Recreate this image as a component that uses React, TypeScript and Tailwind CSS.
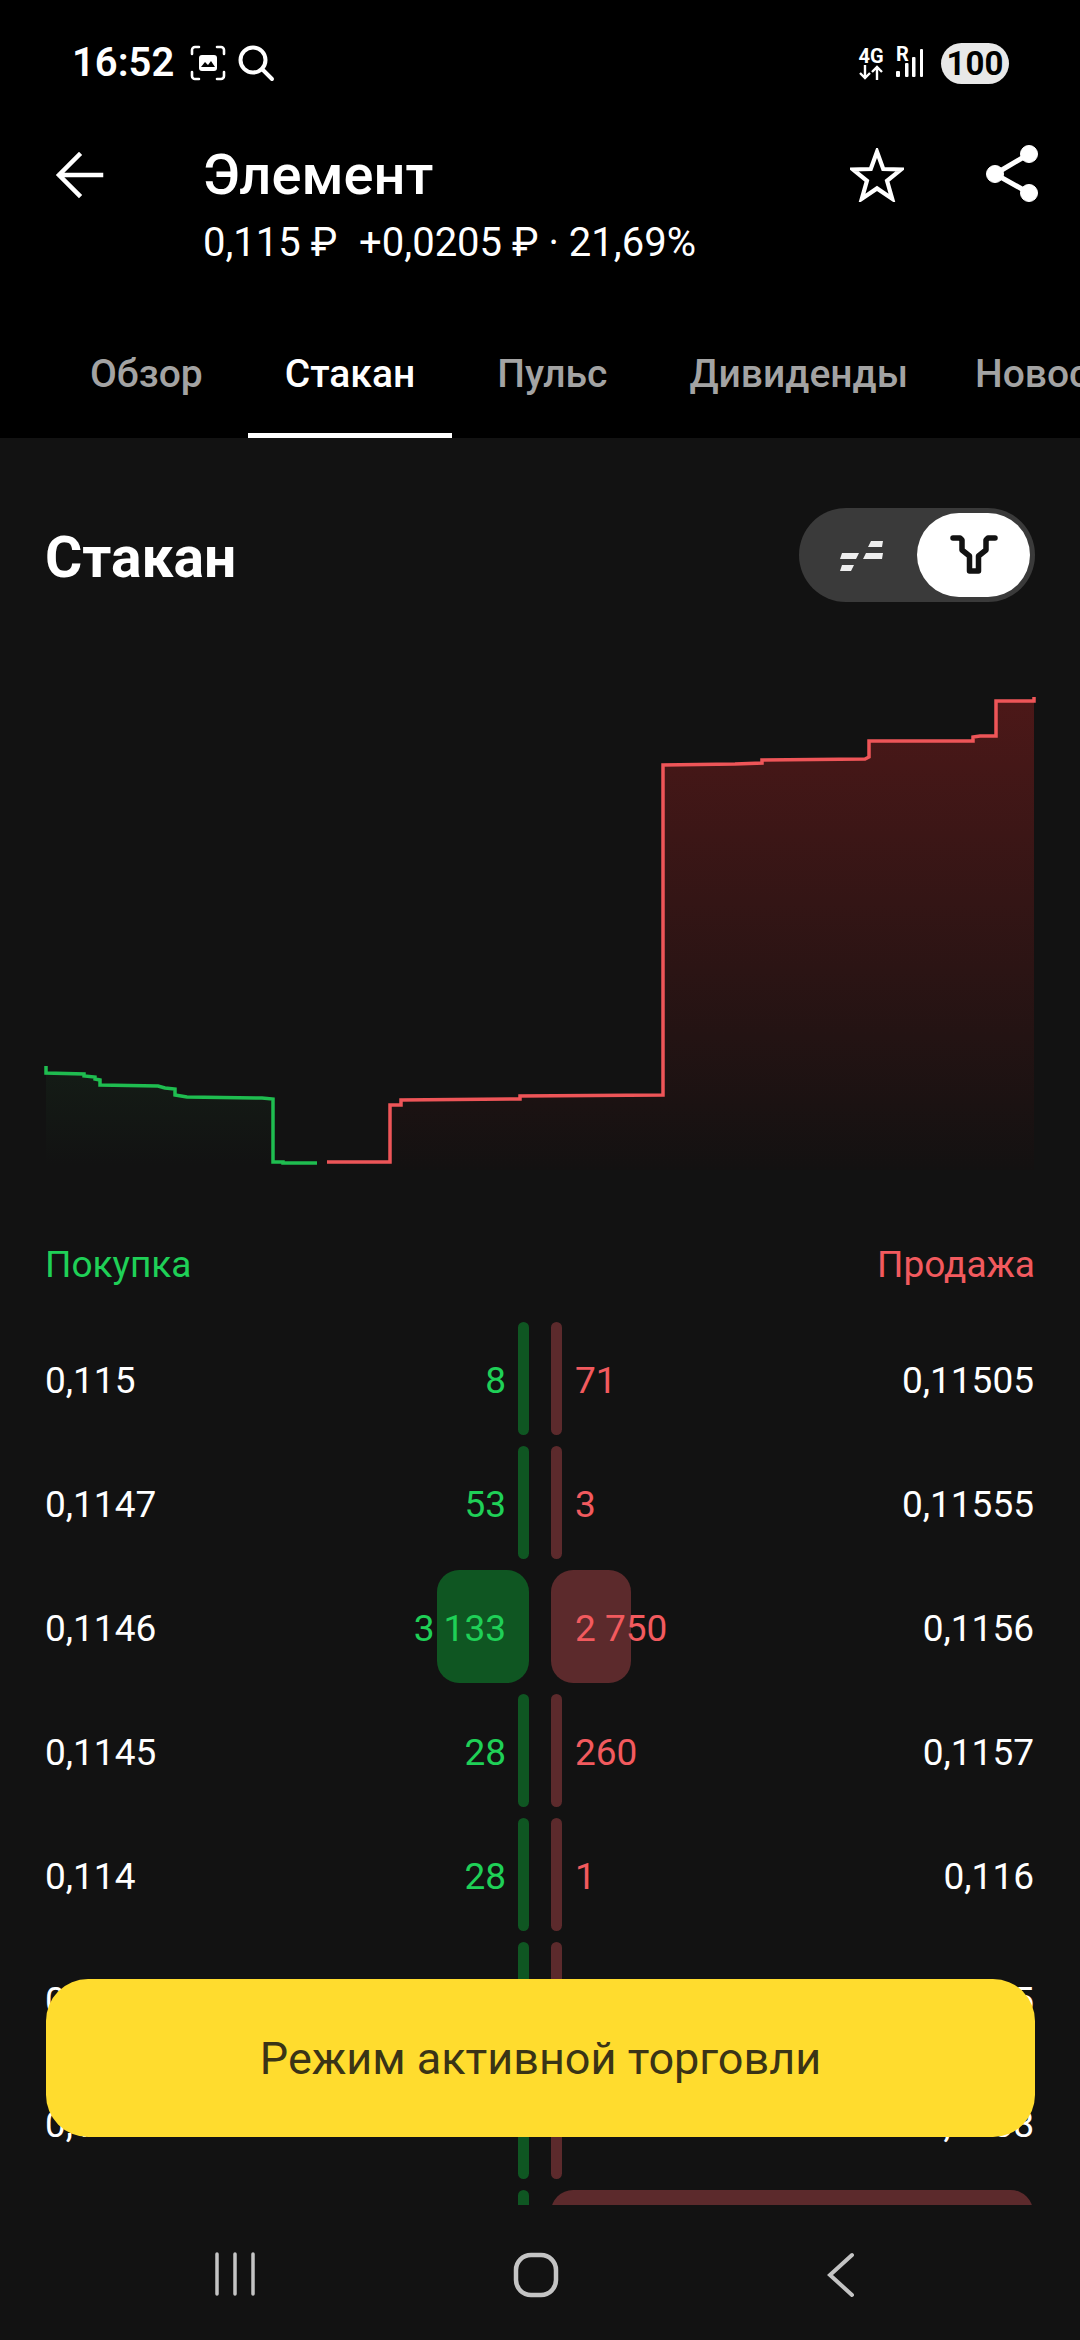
import React from "react";

const rows = [
  { p: "0,115", b: "8", a: "71", s: "0,11505", bw: 11, aw: 11 },
  { p: "0,1147", b: "53", a: "3", s: "0,11555", bw: 11, aw: 11 },
  { p: "0,1146", b: "3 133", a: "2 750", s: "0,1156", bw: 92, aw: 80 },
  { p: "0,1145", b: "28", a: "260", s: "0,1157", bw: 11, aw: 11 },
  { p: "0,114", b: "28", a: "1", s: "0,116", bw: 11, aw: 11 },
  { p: "0,1135", b: "41", a: "15", s: "0,1165", bw: 11, aw: 11 },
  { p: "0,1132", b: "17", a: "32", s: "0,1208", bw: 11, aw: 11 },
  { p: "0,113", b: "9", a: "18 400", s: "0,121", bw: 11, aw: 482 },
];

const tabs = ["Обзор", "Стакан", "Пульс", "Дивиденды", "Новости"];

const redLine =
  "M327 1162 H390 V1105 H401 V1100 L520 1099 V1096 L663 1095 V765 L735 764 L762 763 V760 L865 759 L869 757 V741 L973 741 V737 L980 736 H996 V701 H1034 V697";
const redFill =
  "M330 1162 H390 V1105 H401 V1100 L520 1099 V1096 L663 1095 V765 L735 764 L762 763 V760 L865 759 L869 757 V741 L973 741 V737 L980 736 H996 V701 H1034 V1170 H330 Z";
const greenLine =
  "M46 1066 V1073 L84 1074 V1076 L95 1077 V1079 L100 1080 V1085 L158 1086 L165 1088 L175 1089 V1095 L187 1097 L262 1098 L273 1099 V1162 L283 1162 V1163 H317";
const greenFill =
  "M46 1073 L84 1074 V1076 L95 1077 V1079 L100 1080 V1085 L158 1086 L165 1088 L175 1089 V1095 L187 1097 L262 1098 L273 1099 V1165 H46 Z";

function Chart() {
  return (
    <svg viewBox="0 640 1080 560" className="block w-[1080px] h-[560px]" fill="none">
      <defs>
        <linearGradient id="rf" gradientUnits="userSpaceOnUse" x1="0" y1="700" x2="0" y2="1170">
          <stop offset="0" stopColor="#4c1818" />
          <stop offset="1" stopColor="#131111" />
        </linearGradient>
        <linearGradient id="gf" gradientUnits="userSpaceOnUse" x1="0" y1="1070" x2="0" y2="1165">
          <stop offset="0" stopColor="#141c16" />
          <stop offset="1" stopColor="#121212" />
        </linearGradient>
      </defs>
      <path d={redFill} fill="url(#rf)" />
      <path d={greenFill} fill="url(#gf)" />
      <path d={redLine} stroke="#ee5558" strokeWidth="3.5" />
      <path d={greenLine} stroke="#1fbd50" strokeWidth="3.5" />
    </svg>
  );
}

function StatusBar() {
  return (
    <div className="h-[126px] flex items-center pl-[72px] text-white">
      <span className="w-[118px] text-[40px] font-semibold leading-none">16:52</span>
      <svg width="36" height="36" viewBox="0 0 36 36" fill="none" stroke="#fff" strokeWidth="2.6" strokeLinecap="round">
        <path d="M2 9V5a3 3 0 0 1 3-3h4M27 2h4a3 3 0 0 1 3 3v4M34 27v4a3 3 0 0 1-3 3h-4M9 34H5a3 3 0 0 1-3-3v-4" />
        <rect x="9" y="10" width="18" height="16" rx="3" fill="#fff" stroke="none" />
        <path d="M11 22l4-5 3 3 3-4 4 6z" fill="#000" stroke="none" />
      </svg>
      <svg className="ml-[11px]" width="38" height="38" viewBox="0 0 38 38" fill="none" stroke="#fff" strokeWidth="4" strokeLinecap="round">
        <circle cx="16" cy="16" r="12.5" />
        <path d="M25 25l10 10" />
      </svg>
      <div className="ml-auto flex items-center mr-[71px]">
        <div className="flex flex-col items-center w-[26px]">
          <span className="text-[20px] font-bold leading-[18px]">4G</span>
          <svg width="26" height="15" viewBox="0 0 26 15" fill="none" stroke="#fff" strokeWidth="2.4">
            <path d="M7 0v13M2 8l5 5 5-5M19 15V2M14 7l5-5 5 5" />
          </svg>
        </div>
        <div className="ml-[10px] relative w-[32px] h-[32px]">
          <span className="absolute left-[2px] -top-[2px] text-[20px] font-bold leading-[18px]">R</span>
          <svg className="absolute left-0 top-0" width="32" height="32" viewBox="0 0 32 32" fill="#fff">
            <rect x="2" y="24" width="4" height="6" rx="1" />
            <rect x="11" y="16" width="3.5" height="14" rx="1" />
            <rect x="18" y="10" width="3.5" height="20" rx="1" />
            <rect x="26" y="2" width="3" height="28" rx="1" />
          </svg>
        </div>
        <div className="ml-[15px] w-[68px] h-[41px] rounded-full bg-[#e8e8e8] flex items-center justify-center text-black text-[33px] font-bold leading-none">
          100
        </div>
      </div>
    </div>
  );
}

function Header() {
  return (
    <header className="h-[438px] bg-black text-white overflow-hidden shrink-0">
      <StatusBar />
      <div className="h-[192px] flex items-start pl-[55px] pt-[15px]">
        <svg className="mt-[9px]" width="50" height="50" viewBox="0 0 50 50" fill="none" stroke="#fff" strokeWidth="4.5" strokeLinecap="square">
          <path d="M46 25H5M24 5L4 25l20 20" />
        </svg>
        <div className="ml-[98px]">
          <div className="text-[56px] font-medium leading-[68px]">Элемент</div>
          <div className="mt-[10px] text-[40px] leading-[48px] whitespace-pre">
            <span>{"0,115 ₽  "}</span>
            <span className="ml-[2px]">{"+0,0205 ₽ · 21,69%"}</span>
          </div>
        </div>
        <svg className="ml-auto mt-[7px]" width="54" height="54" viewBox="0 0 58 58" fill="none" stroke="#fff" strokeWidth="4.5" strokeLinejoin="miter">
          <path d="M29 4l6.7 18.6 19.3.4-15.2 12.2 5.5 19.3L29 43.400 12.700 54.500l5.500-19.300L3 23l19.300-.4z" />
        </svg>
        <svg className="ml-[81px] mr-[41px] mt-[1px]" width="54" height="60" viewBox="0 0 54 60" fill="#fff" stroke="#fff">
          <circle cx="44" cy="12" r="8.500" />
          <circle cx="10" cy="32" r="8.500" />
          <circle cx="44" cy="51" r="8.500" />
          <path d="M44 12L10 32l34 19" fill="none" strokeWidth="5" />
        </svg>
      </div>
      <nav className="h-[120px] flex pl-[53px] gap-[8px] whitespace-nowrap">
        {tabs.map((t) => (
          <div
            key={t}
            className={
              t === "Стакан"
                ? "relative h-full px-[37px] pb-[8px] flex items-center text-[39px] font-medium text-white"
                : t === "Новости"
                  ? "relative h-full px-[37px] -ml-[15px] pb-[8px] flex items-center text-[39px] font-medium text-[#a3a3a3]"
                  : "relative h-full px-[37px] pb-[8px] flex items-center text-[39px] font-medium text-[#a3a3a3]"
            }
          >
            {t}
            {t === "Стакан" && <div className="absolute left-0 right-0 bottom-0 h-[5px] bg-white" />}
          </div>
        ))}
      </nav>
    </header>
  );
}

function Toggle() {
  return (
    <div className="w-[236px] h-[94px] rounded-full bg-[#3a3a3a] flex items-center p-[5px]">
      <div className="flex-1 flex justify-center">
        <svg width="44" height="32" viewBox="0 0 44 32" fill="#eeeeee">
          <path d="M3 14h17l-3 6H1zM3 26h12l-3 6H1zM27 14h17l-1 6H24zM32 2h12l-1 6H29z" />
        </svg>
      </div>
      <div className="w-[113px] h-[84px] rounded-full bg-white flex items-center justify-center">
        <svg width="48" height="40" viewBox="0 0 48 40" fill="none" stroke="#121212" strokeWidth="5.500" strokeLinejoin="round" strokeLinecap="round">
          <path d="M3 3h7l2 2V15l7.500 6v15h9V21l7.500-6V5l2-2h7" />
        </svg>
      </div>
    </div>
  );
}

function Rows() {
  return (
    <div className="text-[37px] leading-none">
      {rows.map((r, i) => (
        <div key={i} className="flex h-[113px] mb-[11px]">
          <div className="relative w-[484px] ml-[45px] pt-[3px] flex items-center justify-between">
            <div
              className="absolute right-0 top-0 bottom-0 bg-[#0f5622] rounded-[11px] data-[big=true]:rounded-[22px]"
              data-big={r.bw > 11}
              style={{ width: r.bw }}
            />
            <span className="relative text-white">{r.p}</span>
            <span className="relative text-[#1fd057] pr-[23px]">{r.b}</span>
          </div>
          <div className="relative w-[483px] ml-[22px] pt-[3px] flex items-center justify-between">
            <div
              className="absolute left-0 top-0 bottom-0 bg-[#5c2a2c] rounded-[11px] data-[big=true]:rounded-[22px]"
              data-big={r.aw > 11}
              style={{ width: r.aw }}
            />
            <span className="relative text-[#f25a5e] pl-[24px]">{r.a}</span>
            <span className="relative text-white">{r.s}</span>
          </div>
        </div>
      ))}
    </div>
  );
}

function NavBar() {
  return (
    <div className="h-[135px] bg-[#121212] shrink-0 relative flex pt-[47px] pl-[214px]">
      <svg width="42" height="44" viewBox="0 0 42 44" fill="none" stroke="#c4c4c4" strokeWidth="3.500" strokeLinecap="round">
        <path d="M3 2v40M21 2v40M39 2v40" />
      </svg>
      <svg className="ml-[257px]" width="46" height="46" viewBox="0 0 46 46" fill="none" stroke="#c4c4c4" strokeWidth="4.500">
        <rect x="3" y="3" width="40" height="40" rx="15" />
      </svg>
      <svg className="ml-[266px]" width="30" height="46" viewBox="0 0 30 46" fill="none" stroke="#c4c4c4" strokeWidth="4" strokeLinecap="round">
        <path d="M27 3L5 23l22 20" />
      </svg>
    </div>
  );
}

export default function App() {
  return (
    <div className="w-[1080px] h-[2340px] bg-[#121212] flex flex-col overflow-hidden font-['Roboto',sans-serif]">
      <Header />
      <main className="relative flex-1 min-h-0 overflow-hidden">
        <div className="pt-[70px] px-[45px] flex items-center justify-between">
          <h1 className="text-[57px] pt-[4px] font-bold leading-none text-white">Стакан</h1>
          <Toggle />
        </div>
        <div className="mt-[38px]">
          <Chart />
        </div>
        <div className="h-[122px] pt-[8px] px-[45px] flex items-center justify-between text-[37px]">
          <span className="text-[#1fd057]">Покупка</span>
          <span className="text-[#f25a5e]">Продажа</span>
        </div>
        <Rows />
        <button className="absolute left-[46px] right-[45px] bottom-[68px] h-[158px] rounded-[42px] bg-[#ffdc2e] text-[#3a3416] text-[45px] leading-none">
          Режим активной торговли
        </button>
      </main>
      <NavBar />
    </div>
  );
}
